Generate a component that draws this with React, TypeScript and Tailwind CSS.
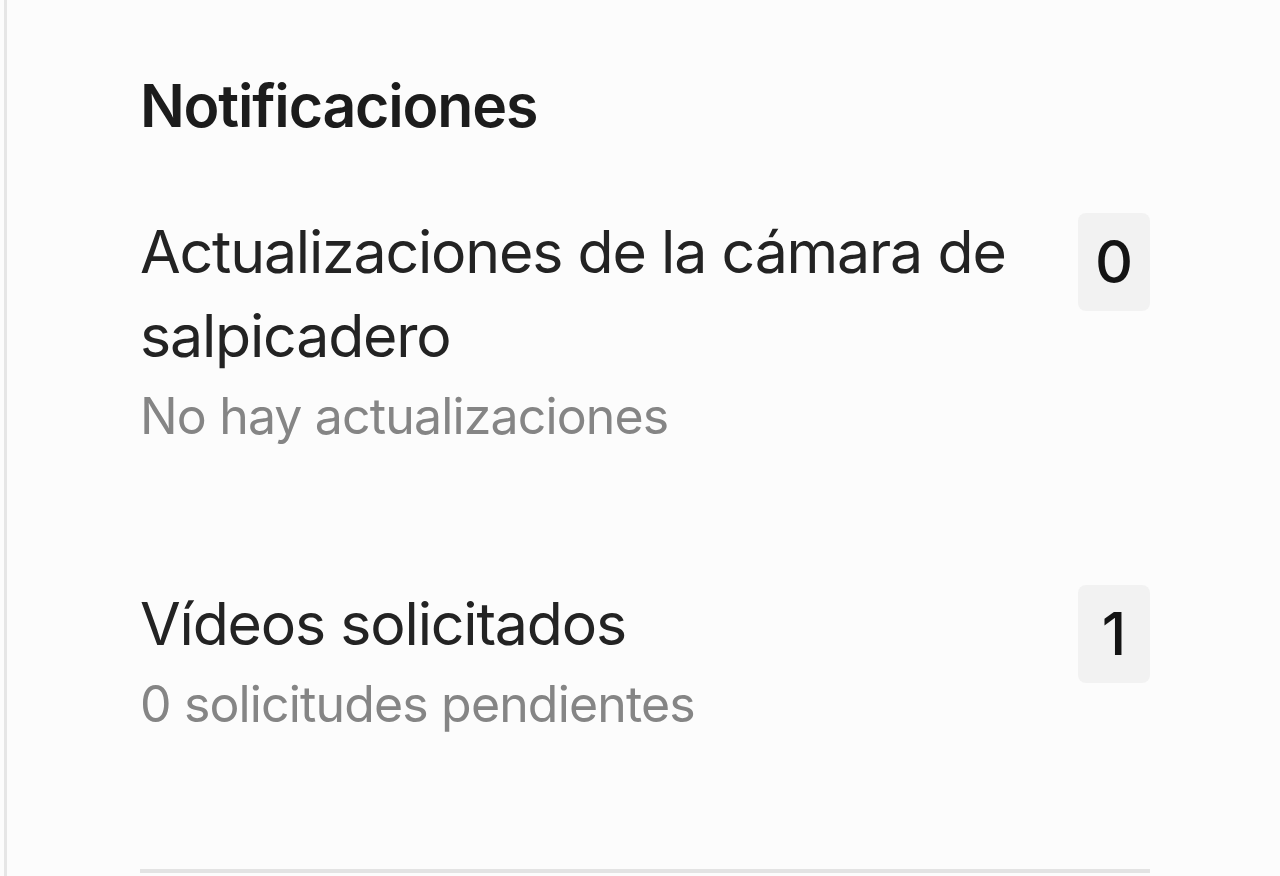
import React from "react";

function Item({ title, sub, count, first }: { title: string; sub: string; count: string; first?: boolean }) {
  return (
    <div className={`flex items-start gap-[40px] ${first ? "pt-[62px]" : "pt-[133px]"}`}>
      <div className="flex-1 min-w-0">
        <div className="text-[59px] leading-[84px] font-normal tracking-[-0.02em] text-[#232323]">{title}</div>
        <div className="mt-[5px] text-[50px] leading-[66px] tracking-[-0.017em] text-[#858585]">{sub}</div>
      </div>
      <div className="mt-[3px] w-[72px] h-[98px] shrink-0 rounded-[8px] bg-[#f2f2f2] flex items-center justify-center text-[59px] font-medium text-[#141414]">
        {count}
      </div>
    </div>
  );
}

export default function App() {
  return (
    <div
      className="h-[876px] overflow-hidden bg-[#fcfcfc] pl-[4px]"
      style={{ fontFamily: "Inter, 'Noto Sans', sans-serif" }}
    >
      <div className="h-full border-l-[3px] border-[#e6e6e6] pl-[133px] pr-[130px] pt-[64px]">
        <h2 className="text-[59px] leading-[84px] font-semibold tracking-[-0.02em] text-[#1c1c1c]">Notificaciones</h2>
        <Item first title="Actualizaciones de la cámara de salpicadero" sub="No hay actualizaciones" count="0" />
        <Item title="Vídeos solicitados" sub="0 solicitudes pendientes" count="1" />
        <div className="mt-[132px] border-t-[4px] border-[#e3e3e3]" />
      </div>
    </div>
  );
}
